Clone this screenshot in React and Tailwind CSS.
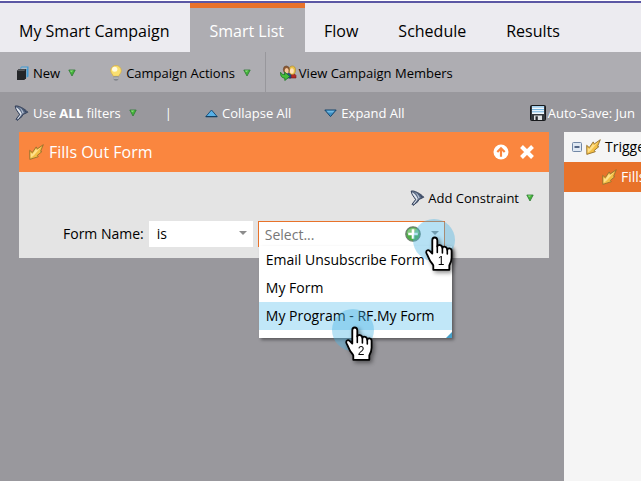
import React from "react";

function GreenArrow() {
  return (
    <svg width="8" height="8" viewBox="0 0 8 8" className="shrink-0" aria-hidden="true">
      <path d="M.8 1h6.400L4 7z" fill="#46b53b" stroke="#2f7a35" strokeWidth=".8" strokeLinejoin="round" />
      <path d="M2 1.600h3.500L3 3.200z" fill="#8be27c" />
    </svg>
  );
}

function BlueTriangle({ down }) {
  return (
    <svg width="13" height="9" viewBox="0 0 13 9" className="shrink-0" aria-hidden="true">
      {down ? (
        <>
          <path d="M.8 1h11.4L6.5 7.6z" fill="#3d8fc4" stroke="#17476d" strokeLinejoin="round" />
          <path d="M2.5 1.8h8L8.8 3.6H4z" fill="#72b9e2" />
        </>
      ) : (
        <>
          <path d="M6.5 1 12.2 7.6H.8z" fill="#58b0e6" stroke="#1d527c" strokeLinejoin="round" />
          <path d="M.8 7.7h11.4" stroke="#123a5a" />
        </>
      )}
    </svg>
  );
}

function Funnel() {
  return (
    <svg width="15" height="16" viewBox="0 0 15 16" className="shrink-0" aria-hidden="true">
      <path d="M1.200 1C4 .2 11 3.800 13.800 7.200L8.800 9.600 8 11.500 3.200 15.400 2 14.200 5.600 9.600C3.900 6.600 1.400 4.700 1.200 1z" fill="#5b6b85" stroke="#2b3954" strokeWidth=".9" />
      <path d="M1.800 2.300c.9 2.300 2.500 4.400 4.600 7.100L2.900 14.200l1.500-.4L7.800 9C6.500 5.700 4.500 3.300 1.800 2.300z" fill="#e4e9f1" />
      <path d="M3.200 1.800c3 1 4.500 3.500 5.200 6.600l1.400-.5C8.800 5 6.600 2.600 3.200 1.800z" fill="#b3bfd2" />
      <path d="M7.600 3.800c2 1.200 3.200 2.200 4 3.800l1.200-.5C11.500 5.700 9.600 4.500 7.600 3.800z" fill="#34435f" />
    </svg>
  );
}

function NewIcon() {
  return (
    <svg width="12" height="15" viewBox="0 0 12 15" className="shrink-0" aria-hidden="true">
      <path d="M3.500 1.500l1-1H11.500V10.500L9.500 11.800V3.500H3.500z" fill="#3f9ad3" />
      <path d="M4.500 1.600h5.700V3H4z" fill="#aeb8c2" />
      <path d="M0 4.800 1.800 3H9v9.200L7.300 14H0z" fill="#242629" />
      <path d="M.3 4.900 2 3.300h6.700L7.300 4.900z" fill="#55585c" />
    </svg>
  );
}

function Bulb() {
  return (
    <svg width="12" height="16" viewBox="0 0 12 16" className="shrink-0" aria-hidden="true">
      <path d="M6 .5a5.200 5.200 0 0 1 5.300 5.200c0 2.500-2.100 3.300-2.600 5.600H3.300C2.800 9 .7 8.200.7 5.700A5.200 5.200 0 0 1 6 .5z" fill="#f9df70" stroke="#d7ae3f" strokeWidth=".7" />
      <ellipse cx="4.700" cy="4.200" rx="2.700" ry="2.500" fill="#fffbe0" />
      <path d="M3.500 11.300h5v2.900l-1.300 1.300H4.800l-1.300-1.300z" fill="#777a80" />
      <path d="M3.500 12.200h5M3.500 13.700h5" stroke="#d9dce0" strokeWidth=".7" />
    </svg>
  );
}

function Members() {
  return (
    <svg width="17" height="16" viewBox="0 0 17 16" className="shrink-0" aria-hidden="true">
      <path d="M9 13V9.500c1-1.500 5.500-1.500 7 1V13z" fill="#b42a26" stroke="#741a17" strokeWidth=".6" />
      <path d="M4.500 13V8.500h6.500V13z" fill="#264f8f" stroke="#17315c" strokeWidth=".6" />
      <ellipse cx="12.300" cy="5.200" rx="3.200" ry="4.200" fill="#e8c14a" stroke="#a9812a" strokeWidth=".6" />
      <ellipse cx="11.900" cy="6" rx="1.900" ry="2.800" fill="#ffe1ba" />
      <ellipse cx="6.300" cy="4.600" rx="3" ry="3.700" fill="#8c5934" stroke="#603b21" strokeWidth=".5" />
      <ellipse cx="6.700" cy="5.700" rx="2" ry="2.700" fill="#f6c79b" />
      <path d="M.6 7.200c.6 1.700 1.700 2.400 4.200 2.400V7.200l5 4.300-5 4V13.200C1.600 13 .2 10.700.6 7.200z" fill="#45bd3b" stroke="#1b7624" strokeWidth=".8" strokeLinejoin="round" />
    </svg>
  );
}

function Disk() {
  return (
    <svg width="16" height="16" viewBox="0 0 16 16" className="shrink-0" aria-hidden="true">
      <rect x=".5" y=".5" width="15" height="15" rx="1" fill="#34383d" stroke="#17191c" />
      <path d="M2 1h12v8H2z" fill="#f3f8fc" />
      <path d="M2 1h12v1.800H2z" fill="#a9d3ef" />
      <path d="M2 4.600h12M2 6.800h12" stroke="#6db0dc" strokeWidth="1" />
      <path d="M4 10.500h8V15H4z" fill="#dfe2e4" />
      <path d="M5.500 11.300h2.300V15H5.500z" fill="#222529" />
    </svg>
  );
}

function Trigger() {
  return (
    <svg width="15" height="16" viewBox="0 0 15 16" className="shrink-0" aria-hidden="true">
      <path d="M14.300.7 11.600 7.300 12.800 7.700 8.300 11.400 9.300 12.700.8 15.400.7 6.300 3.300 8.600 7.200 2.900 8.300 4.900z" fill="#f3bf45" stroke="#94702f" strokeWidth=".9" strokeLinejoin="round" />
      <path d="M12.200 3.100 8 6.200 6.900 5 3.500 10 1.700 8.700v5.200L5 11.200z" fill="#ffe08a" />
    </svg>
  );
}

function Plus() {
  return (
    <svg width="16" height="16" viewBox="0 0 16 16" aria-hidden="true">
      <circle cx="8" cy="8" r="7.200" fill="#4fae48" stroke="#6d7f70" strokeWidth="1.300" />
      <path d="M2 7.500a6 5.500 0 0 1 12 0z" fill="#84c880" />
      <path d="M8 3.200v9.600M3.200 8h9.600" stroke="#fff" strokeWidth="2.600" />
    </svg>
  );
}

function Caret() {
  return (
    <svg width="8" height="4" viewBox="0 0 8 4" aria-hidden="true">
      <path d="M0 0h8L4 4z" fill="#8c8c8c" />
    </svg>
  );
}

function Hand({ step }) {
  return (
    <svg width="34" height="42" viewBox="0 0 34 42" className="drop-shadow-[2px_2px_2px_rgba(0,0,0,0.45)]" aria-hidden="true">
      <path
        d="M9.700 2.500C8 2.500 7.300 3.600 7.300 5.200V18.500L4.600 15.800C3.300 14.500 1.200 15.200 1.200 17.200C1.200 18.200 1.800 18.900 2.300 19.900L4.600 24.800C5.500 27 7.900 28.900 8.300 30.500V34.800H24.300V30.500C25.900 27.500 26.600 25.800 26.600 22.700V15.800C26.600 13.100 22.700 12.600 22.300 14.900C22.300 11.400 18 10.800 17.400 13C17.400 9.700 12.800 9 12.300 11.500V5.200C12.300 3.500 11.400 2.500 9.700 2.500z"
        fill="#fff"
        stroke="#000"
        strokeWidth="1.800"
        strokeLinejoin="round"
      />
      <path d="M12.300 11v6.500M17.400 12.500v5.500M22.300 14.500V19" stroke="#000" strokeWidth="1.600" strokeLinecap="round" />
      <text x="16" y="30" textAnchor="middle" fontSize="12" fill="#000" className="font-['Liberation_Sans',sans-serif]">{step}</text>
    </svg>
  );
}

const tabs = ["My Smart Campaign", "Smart List", "Flow", "Schedule", "Results"];
const options = ["Email Unsubscribe Form", "My Form", "My Program - RF.My Form"];

export default function App() {
  return (
    <div className="flex min-h-screen flex-col overflow-hidden whitespace-nowrap bg-[#99989d] font-['Open_Sans',sans-serif] text-[13px] leading-5 text-black">
      <header className="border-t border-white">
        <nav className="flex h-[51px] border-t-2 border-[#5b57a4] bg-[#ecebf0] text-base">
          {tabs.map((tab) => (
            <a
              key={tab}
              href="#"
              aria-current={tab === "Smart List" ? "page" : undefined}
              className={
                tab === "Smart List"
                  ? "border-t-[5px] border-[#e8722a] bg-[#aeadb2] pl-[19px] pr-[21px] pt-[11px] text-white"
                  : "pl-[19px] pr-[21px] pt-4"
              }
            >
              {tab}
            </a>
          ))}
        </nav>
      </header>

      <div className="flex h-10 bg-[#aeadb2]">
        <div className="flex items-center gap-[34px] border-r border-[#98979c] pl-[17px] pr-3.5 pt-0.5">
          <button type="button" className="flex items-center gap-1">
            <NewIcon />
            New
            <span className="ml-1"><GreenArrow /></span>
          </button>
          <button type="button" className="flex items-center gap-1">
            <Bulb />
            Campaign Actions
            <span className="ml-1"><GreenArrow /></span>
          </button>
        </div>
        <button type="button" className="flex items-center gap-0.5 pl-3.5 pt-0.5">
          <Members />
          View Campaign Members
        </button>
      </div>

      <div className="flex h-10 items-center pl-3.5 pr-1.5 pt-0.5 text-white">
        <button type="button" className="flex items-center gap-1">
          <Funnel />
          <span>Use <b>ALL</b> filters</span>
          <span className="ml-1"><GreenArrow /></span>
        </button>
        <span className="ml-7">|</span>
        <button type="button" className="ml-[33px] flex items-center gap-1">
          <BlueTriangle />
          Collapse All
        </button>
        <button type="button" className="ml-[33px] flex items-center gap-1">
          <BlueTriangle down />
          Expand All
        </button>
        <span className="ml-auto flex items-center gap-0.5">
          <Disk />
          Auto-Save: Jun
        </span>
      </div>

      <div className="flex flex-1">
        <main className="min-w-0 flex-1 pl-[19px] pr-[15px]">
          <section className="bg-[#e4e4e4]">
            <div className="flex h-10 items-center gap-[5px] bg-[#fa863f] pl-2.5 pr-3.5 text-white">
              <Trigger />
              <h2 className="flex-1 text-base">Fills Out Form</h2>
              <button type="button" aria-label="Move up">
                <svg width="16" height="16" viewBox="0 0 16 16" aria-hidden="true">
                  <circle cx="8" cy="8" r="7.500" fill="#fff" />
                  <path d="M8 12.800V5M4.300 8 8 4.300 11.700 8" fill="none" stroke="#fa863f" strokeWidth="2.200" />
                </svg>
              </button>
              <button type="button" aria-label="Remove" className="ml-[5px]">
                <svg width="16" height="16" viewBox="0 0 16 16" aria-hidden="true">
                  <path d="M2.500 2.500l11 11M13.500 2.500l-11 11" stroke="#fff" strokeWidth="4" />
                </svg>
              </button>
            </div>

            <div className="flex justify-end pb-[13px] pr-[15px] pt-4">
              <button type="button" className="flex items-center gap-[3px]">
                <Funnel />
                Add Constraint
                <span className="ml-1"><GreenArrow /></span>
              </button>
            </div>

            <form className="flex items-center gap-[5px] pb-[11px] pl-11 text-sm">
              <label htmlFor="operator">Form Name:</label>
              <div className="relative">
                <select id="operator" className="block h-[26px] w-[104px] appearance-none bg-white pl-2 outline-none">
                  <option>is</option>
                </select>
                <span className="pointer-events-none absolute right-1.5 top-2.5"><Caret /></span>
              </div>
              <div className="relative">
                <input
                  type="text"
                  role="combobox"
                  aria-label="Form"
                  aria-expanded="true"
                  aria-controls="forms"
                  placeholder="Select..."
                  className="block h-[26px] w-[187px] border border-b-0 border-[#e8722a] bg-white pl-1.5 outline-none placeholder:text-[#777777]"
                />
                <button type="button" aria-label="Add form" className="absolute left-[147px] top-[5px]"><Plus /></button>
                <span className="absolute right-1.5 top-2.5"><Caret /></span>
                <ul id="forms" role="listbox" className="absolute left-px top-[25px] w-[193px] bg-white pb-2 shadow-[2px_2px_3px_rgba(0,0,0,0.4)]">
                  {options.map((option, i) => (
                    <li key={option} role="option" aria-selected={i === 2} className={i === 2 ? "bg-[#c1e7f8] px-[7px] py-1" : "px-[7px] py-1"}>
                      {option}
                    </li>
                  ))}
                  <li role="presentation" className="absolute bottom-0 right-0">
                    <svg width="6" height="6" viewBox="0 0 6 6" aria-hidden="true"><path d="M6 0v6H0z" fill="#459fc8" /></svg>
                  </li>
                </ul>
                <span className="pointer-events-none absolute -top-0.5 left-[155px] size-[42px] rounded-full bg-[#48b4e4]/40" />
                <span className="pointer-events-none absolute left-[167px] top-3.5"><Hand step="1" /></span>
                <span className="pointer-events-none absolute left-[74px] top-[88px] size-[42px] rounded-full bg-[#48b4e4]/40" />
                <span className="pointer-events-none absolute left-[87px] top-[104px]"><Hand step="2" /></span>
              </div>
            </form>
          </section>
        </main>

        <aside className="w-[77px] overflow-hidden bg-[#f5f5f5] text-sm">
          <div className="flex h-[30px] items-center gap-1 pl-2">
            <button type="button" aria-label="Collapse triggers">
              <svg width="10" height="10" viewBox="0 0 10 10" aria-hidden="true">
                <rect x=".5" y=".5" width="9" height="9" rx="1" fill="#dfe8f2" stroke="#7288a6" />
                <path d="M2.500 5h5" stroke="#263c63" strokeWidth="1.500" />
              </svg>
            </button>
            <Trigger />
            Triggers
          </div>
          <div className="flex h-[30px] items-center gap-1 bg-[#e8722a] pl-[38px] text-white">
            <Trigger />
            Fills Out Form
          </div>
        </aside>
      </div>
    </div>
  );
}
